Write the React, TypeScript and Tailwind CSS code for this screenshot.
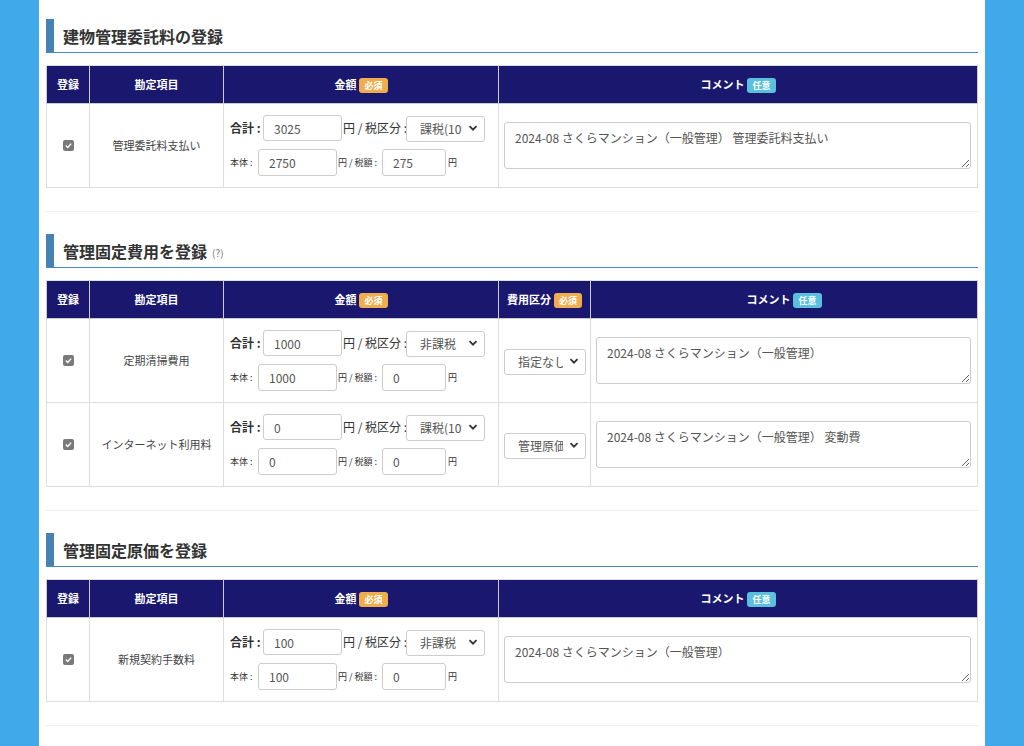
import React from "react";

type Row = {
  item: string;
  total: string;
  tax: string;
  body: string;
  taxAmount: string;
  kind?: string;
  comment: string;
};

type Section = {
  title: string;
  help?: boolean;
  withKind?: boolean;
  rows: Row[];
};

const sections: Section[] = [
  {
    title: "建物管理委託料の登録",
    rows: [
      {
        item: "管理委託料支払い",
        total: "3025",
        tax: "課税(10%)",
        body: "2750",
        taxAmount: "275",
        comment: "2024-08 さくらマンション（一般管理） 管理委託料支払い",
      },
    ],
  },
  {
    title: "管理固定費用を登録",
    help: true,
    withKind: true,
    rows: [
      {
        item: "定期清掃費用",
        total: "1000",
        tax: "非課税",
        body: "1000",
        taxAmount: "0",
        kind: "指定なし",
        comment: "2024-08 さくらマンション（一般管理）",
      },
      {
        item: "インターネット利用料",
        total: "0",
        tax: "課税(10%)",
        body: "0",
        taxAmount: "0",
        kind: "管理原価",
        comment: "2024-08 さくらマンション（一般管理） 変動費",
      },
    ],
  },
  {
    title: "管理固定原価を登録",
    rows: [
      {
        item: "新規契約手数料",
        total: "100",
        tax: "非課税",
        body: "100",
        taxAmount: "0",
        comment: "2024-08 さくらマンション（一般管理）",
      },
    ],
  },
];

const font = { fontFamily: '"Noto Sans CJK JP", "Noto Sans", sans-serif' };

function Badge({ kind }: { kind: "req" | "opt" }) {
  return (
    <span
      className={`ml-[3px] inline-flex h-[15px] items-center rounded-[3px] px-[5px] text-[9px] font-bold leading-none text-white ${
        kind === "req" ? "bg-[#f0ad4e]" : "bg-[#5bc0de]"
      }`}
    >
      {kind === "req" ? "必須" : "任意"}
    </span>
  );
}

function Chevron() {
  return (
    <svg
      className="pointer-events-none absolute right-[7px] top-1/2 -translate-y-1/2"
      width="10"
      height="10"
      viewBox="0 0 10 10"
    >
      <path d="M1.5 3.2 L5 6.7 L8.5 3.2" fill="none" stroke="#333" strokeWidth="1.8" />
    </svg>
  );
}

function Select({ value, width }: { value: string; width: string }) {
  return (
    <div className={`relative h-[26px] ${width}`}>
      <select
        defaultValue={value}
        className="h-full w-full appearance-none rounded-[3px] border border-[#ccc] bg-white pl-[13px] pr-[22px] text-[12px] text-[#555] outline-none"
        style={font}
      >
        <option>{value}</option>
      </select>
      <Chevron />
    </div>
  );
}

function Input({ value, width, h }: { value: string; width: string; h: string }) {
  return (
    <input
      readOnly
      value={value}
      className={`${width} ${h} rounded-[3px] border border-[#ccc] bg-white px-[10px] text-[12px] text-[#555] outline-none`}
      style={font}
    />
  );
}

function Check() {
  return (
    <span className="inline-flex h-[11px] w-[11px] items-center justify-center rounded-[2px] bg-[#7a7a7a]">
      <svg width="9" height="9" viewBox="0 0 9 9">
        <path d="M1.8 4.6 L3.7 6.4 L7.2 2.6" fill="none" stroke="#fff" strokeWidth="1.4" />
      </svg>
    </span>
  );
}

function AmountCell({ r }: { r: Row }) {
  return (
    <div className="flex flex-col gap-[8px] text-[#333]">
      <div className="flex items-center whitespace-nowrap">
        <span className="w-[33px] text-[12px] font-bold">合計 :</span>
        <Input value={r.total} width="w-[79px]" h="h-[26px]" />
        <span className="w-[64px] pl-[1px] text-[12px]">円 / 税区分 :</span>
        <Select value={r.tax} width="w-[79px]" />
      </div>
      <div className="flex items-center whitespace-nowrap">
        <span className="w-[28px] text-[9px]">本体 :</span>
        <Input value={r.body} width="w-[79px]" h="h-[27px]" />
        <span className="w-[45px] pl-[1px] text-[9px]">円 / 税額 :</span>
        <Input value={r.taxAmount} width="w-[64px]" h="h-[27px]" />
        <span className="pl-[2px] text-[9px]">円</span>
      </div>
    </div>
  );
}

function SectionBlock({ s }: { s: Section }) {
  const th =
    "h-[38px] border border-[#ccc] border-t-[#ddd] bg-[#1a186e] text-center text-[11px] font-bold text-white";
  const td = "border border-[#ddd] align-middle";
  return (
    <div>
      <div className="flex h-[33px] items-center border-l-[8px] border-l-[#4682b4] pl-[9px]">
        <h2 className="text-[16px] font-bold text-[#333]">{s.title}</h2>
        {s.help && <span className="ml-[5px] mt-[4px] text-[10px] text-[#777]">(?)</span>}
      </div>
      <div className="h-px bg-[#4a8ac4]" />
      <table className="mt-[12px] w-full table-fixed border-collapse">
        <colgroup>
          <col className="w-[43px]" />
          <col className="w-[134px]" />
          <col className="w-[275px]" />
          {s.withKind && <col className="w-[92px]" />}
          <col />
        </colgroup>
        <thead>
          <tr>
            <th className={th}>登録</th>
            <th className={th}>勘定項目</th>
            <th className={th}>
              金額
              <Badge kind="req" />
            </th>
            {s.withKind && (
              <th className={th}>
                費用区分
                <Badge kind="req" />
              </th>
            )}
            <th className={th}>
              コメント
              <Badge kind="opt" />
            </th>
          </tr>
        </thead>
        <tbody>
          {s.rows.map((r) => (
            <tr key={r.item}>
              <td className={`${td} text-center`}>
                <div className="flex justify-center">
                  <Check />
                </div>
              </td>
              <td className={`${td} text-center text-[11px] text-[#444]`}>{r.item}</td>
              <td className={`${td} py-[11px] pl-[6px] pr-[4px]`}>
                <AmountCell r={r} />
              </td>
              {s.withKind && (
                <td className={`${td} px-[5px]`}>
                  <Select value={r.kind ?? ""} width="w-[82px]" />
                </td>
              )}
              <td className={`${td} pl-[5px] pr-[6px]`}>
                <textarea
                  readOnly
                  value={r.comment}
                  className="block h-[47px] w-full rounded-[3px] border border-[#ccc] px-[10px] py-[6px] text-[12px] text-[#555] outline-none"
                  style={font}
                />
              </td>
            </tr>
          ))}
        </tbody>
      </table>
      <div className="mt-[23px] h-px bg-[#eee]" />
    </div>
  );
}

export default function App() {
  return (
    <div className="flex min-h-[746px] bg-[#3fa9ea]" style={font}>
      <div className="ml-[39px] flex w-[946px] flex-col gap-[22px] bg-white px-[7px] pt-[19px]">
        {sections.map((s) => (
          <SectionBlock key={s.title} s={s} />
        ))}
      </div>
    </div>
  );
}
